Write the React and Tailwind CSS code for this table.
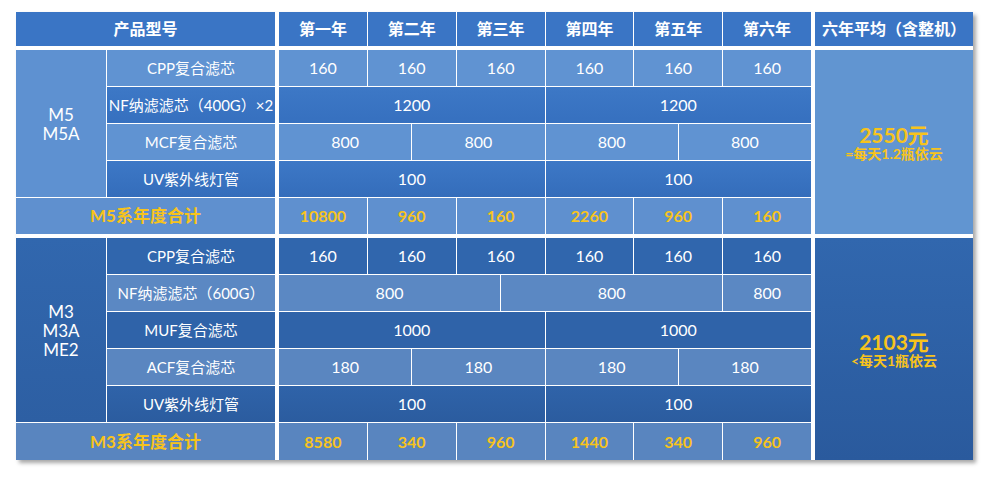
import React from 'react';

const COL_START = ['', 'col-start-1', 'col-start-2', 'col-start-3', 'col-start-4', 'col-start-5', 'col-start-6', 'col-start-7', 'col-start-8', 'col-start-9', 'col-start-10', 'col-start-11', 'col-start-12', 'col-start-13', 'col-start-14', 'col-start-15', 'col-start-16', 'col-start-17'];
const COL_SPAN = ['', 'col-span-1', 'col-span-2', 'col-span-3', 'col-span-4', 'col-span-5', 'col-span-6', 'col-span-7', 'col-span-8', 'col-span-9', 'col-span-10', 'col-span-11', 'col-span-12'];
const ROW_START = ['', 'row-start-1', 'row-start-2', 'row-start-3', 'row-start-4', 'row-start-5', 'row-start-6', 'row-start-7', 'row-start-8', 'row-start-9', 'row-start-10', 'row-start-11', 'row-start-12', 'row-start-13', 'row-start-14'];
const ROW_SPAN = ['', 'row-span-1', 'row-span-2', 'row-span-3', 'row-span-4', 'row-span-5', 'row-span-6'];

const years = ['第一年', '第二年', '第三年', '第四年', '第五年', '第六年'];

const blocks = [
  {
    firstRow: 3,
    model: ['M5', 'M5A'],
    modelBg: 'bg-[#5e91d1]',
    rows: [
      { label: 'CPP复合滤芯', bg: 'bg-[#6093d2]', cells: [[2, '160'], [2, '160'], [2, '160'], [2, '160'], [2, '160'], [2, '160']] },
      { label: 'NF纳滤滤芯（400G）×2', bg: 'bg-gradient-to-b from-[#3d78c6] to-[#3670bf]', cells: [[6, '1200'], [6, '1200']] },
      { label: 'MCF复合滤芯', bg: 'bg-[#6093d2]', cells: [[3, '800'], [3, '800'], [3, '800'], [3, '800']] },
      { label: 'UV紫外线灯管', bg: 'bg-gradient-to-b from-[#3d78c6] to-[#346dbb]', cells: [[6, '100'], [6, '100']] },
    ],
    total: { label: 'M5系年度合计', bg: 'bg-[#5f90cf]', values: ['10800', '960', '160', '2260', '960', '160'] },
    avg: { price: '2550元', note: '=每天1.2瓶依云', bg: 'bg-[#6195d1]' },
  },
  {
    firstRow: 9,
    model: ['M3', 'M3A', 'ME2'],
    modelBg: 'bg-gradient-to-b from-[#3167ae] to-[#2d5fa3]',
    rows: [
      { label: 'CPP复合滤芯', bg: 'bg-[#3066ad]', cells: [[2, '160'], [2, '160'], [2, '160'], [2, '160'], [2, '160'], [2, '160']] },
      { label: 'NF纳滤滤芯（600G）', bg: 'bg-[#5b88c3]', cells: [[5, '800'], [5, '800'], [2, '800']] },
      { label: 'MUF复合滤芯', bg: 'bg-[#2f63a9]', cells: [[6, '1000'], [6, '1000']] },
      { label: 'ACF复合滤芯', bg: 'bg-[#5a86c0]', cells: [[3, '180'], [3, '180'], [3, '180'], [3, '180']] },
      { label: 'UV紫外线灯管', bg: 'bg-gradient-to-b from-[#2f63a9] to-[#2b5c9f]', cells: [[6, '100'], [6, '100']] },
    ],
    total: { label: 'M3系年度合计', bg: 'bg-[#5985bf]', values: ['8580', '340', '960', '1440', '340', '960'] },
    avg: { price: '2103元', note: '<每天1瓶依云', bg: 'bg-gradient-to-b from-[#3167ae] to-[#2a5a9d]' },
  },
];

const Cell = ({ c, cs = 1, r, rs = 1, className = '', children }) => (
  <div className={`${COL_START[c]} ${COL_SPAN[cs]} ${ROW_START[r]} ${ROW_SPAN[rs]} flex items-center justify-center whitespace-nowrap ${className}`}>
    {children}
  </div>
);

const App = () => {
  return (
    <div className="w-[990px] h-[480px] bg-white pt-[12px] pl-[16px] font-['Lato','Noto_Sans_CJK_SC',sans-serif]">
      <div className="w-[957px] h-[448px] grid grid-cols-[90px_168px_2px_repeat(12,minmax(0,1fr))_2px_158px] grid-rows-[34px_2px_repeat(5,36px)_2px_repeat(5,36px)_37px] gap-px bg-white shadow-[3px_3px_4px_rgba(0,0,0,0.35)] text-white text-[15px]">
        {/* header */}
        <Cell c={1} cs={2} r={1} className="bg-[#3a75c5] font-bold text-[16px]">产品型号</Cell>
        {years.map((y, i) => (
          <Cell key={y} c={4 + i * 2} cs={2} r={1} className="bg-[#3a75c5] font-bold text-[16px]">{y}</Cell>
        ))}
        <Cell c={17} r={1} className="bg-[#3a75c5] font-bold text-[16px]">六年平均（含整机）</Cell>

        {blocks.map((b) => {
          const n = b.rows.length;
          const totalRow = b.firstRow + n;
          return (
            <React.Fragment key={b.firstRow}>
              <Cell c={1} r={b.firstRow} rs={n} className={`${b.modelBg} flex-col text-[17px] leading-[19px]`}>
                {b.model.map((m) => <span key={m}>{m}</span>)}
              </Cell>
              {b.rows.map((row, ri) => {
                let pos = 4;
                return (
                  <React.Fragment key={row.label}>
                    <Cell c={2} r={b.firstRow + ri} className={row.bg}>{row.label}</Cell>
                    {row.cells.map(([span, v], ci) => {
                      const start = pos;
                      pos += span;
                      return (
                        <Cell key={ci} c={start} cs={span} r={b.firstRow + ri} className={`${row.bg} text-[16px]`}>{v}</Cell>
                      );
                    })}
                  </React.Fragment>
                );
              })}
              <Cell c={1} cs={2} r={totalRow} className={`${b.total.bg} text-[#f7c31c] font-bold text-[17px]`}>{b.total.label}</Cell>
              {b.total.values.map((v, i) => (
                <Cell key={i} c={4 + i * 2} cs={2} r={totalRow} className={`${b.total.bg} text-[#f7c31c] font-bold text-[16px]`}>{v}</Cell>
              ))}
              <Cell c={17} r={b.firstRow} rs={n + 1} className={`${b.avg.bg} flex-col text-[#f7c31c] font-bold`}>
                <span className="text-[21px] leading-[23px]">{b.avg.price}</span>
                <span className="text-[14px] leading-[16px]">{b.avg.note}</span>
              </Cell>
            </React.Fragment>
          );
        })}
      </div>
    </div>
  );
};

export default App;
